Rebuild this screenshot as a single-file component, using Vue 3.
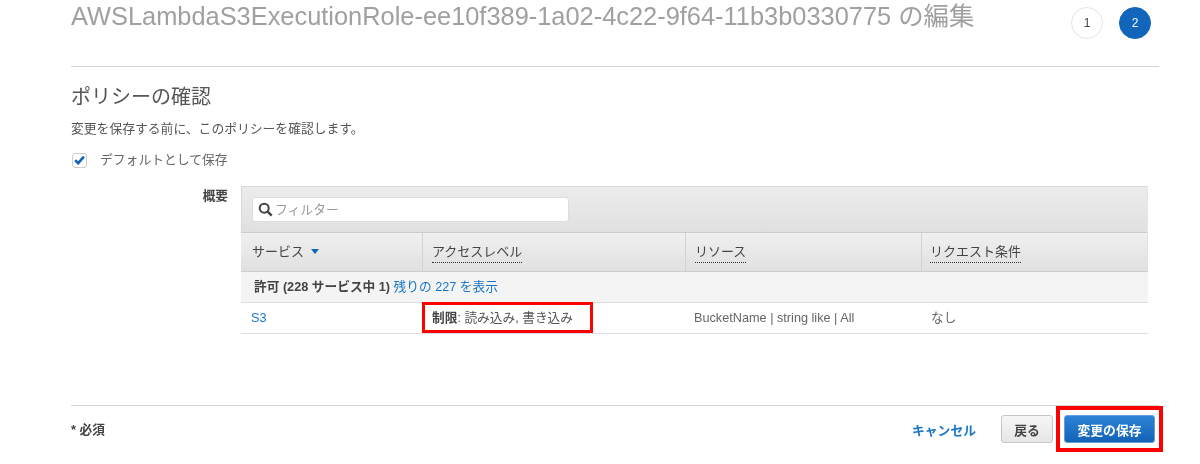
<script setup>
const columns = [
  { label: 'アクセスレベル', width: '263px' },
  { label: 'リソース', width: '236px' },
  { label: 'リクエスト条件', width: 'auto' }
]
</script>

<template>
  <div class="page">
    <header class="head">
      <h1 class="title">AWSLambdaS3ExecutionRole-ee10f389-1a02-4c22-9f64-11b3b0330775 の編集</h1>
      <div class="steps">
        <span class="step">1</span>
        <span class="step on">2</span>
      </div>
    </header>

    <h2 class="sub">ポリシーの確認</h2>
    <p class="desc">変更を保存する前に、このポリシーを確認します。</p>
    <label class="check">
      <span class="box">
        <svg width="11" height="10" viewBox="0 0 10 9"><path d="M1 4.6 3.8 7.4 9 1.4" fill="none" stroke="#1166bb" stroke-width="2.4"/></svg>
      </span>
      <span class="check-text">デフォルトとして保存</span>
    </label>

    <section class="summary">
      <div class="sum-label">概要</div>
      <div class="table">
        <div class="filter-band">
          <div class="filter">
            <svg width="15" height="15" viewBox="0 0 14 14"><circle cx="5.8" cy="5.8" r="4.2" fill="none" stroke="#444" stroke-width="1.9"/><path d="M9 9l3.8 3.8" stroke="#444" stroke-width="2.3"/></svg>
            <span class="filter-text">フィルター</span>
          </div>
        </div>
        <div class="thead">
          <div class="th first">サービス<i class="caret"></i></div>
          <div v-for="c in columns" :key="c.label" class="th" :style="{ width: c.width }">
            <span class="dotted">{{ c.label }}</span>
          </div>
        </div>
        <div class="group">許可 (228 サービス中 1) <a>残りの 227 を表示</a></div>
        <div class="row">
          <div class="td first"><a>S3</a></div>
          <div class="td access"><b>制限</b>: 読み込み, 書き込み<span class="mark"></span></div>
          <div class="td res">BucketName | string like | All</div>
          <div class="td cond">なし</div>
        </div>
      </div>
    </section>

    <footer class="foot">
      <span class="req">* 必須</span>
      <div class="actions">
        <a class="cancel">キャンセル</a>
        <button class="btn back">戻る</button>
        <span class="save-mark"><button class="btn save">変更の保存</button></span>
      </div>
    </footer>
  </div>
</template>

<style scoped>
.page {
  box-sizing: border-box;
  width: 1200px;
  height: 464px;
  padding: 0 41px 0 71px;
  overflow: hidden;
  font-family: "Liberation Sans", "Noto Sans CJK JP", sans-serif;
  font-size: 12.7px;
  color: #444;
  filter: blur(0.35px);
}
.head {
  display: flex;
  justify-content: space-between;
  height: 66px;
  padding-right: 8px;
  border-bottom: 1px solid #d5d5d5;
}
.title {
  margin: 0;
  font-size: 25.4px;
  line-height: 33px;
  font-weight: 400;
  color: #a0a0a0;
  white-space: nowrap;
}
.steps { display: flex; gap: 16px; padding-top: 7px; }
.step {
  box-sizing: border-box;
  width: 32px;
  height: 32px;
  border: 1px solid #e4e4e4;
  border-radius: 50%;
  font-size: 12px;
  line-height: 30px;
  text-align: center;
  color: #444;
}
.step.on { background: #1166bb; border-color: #1166bb; color: #fff; }
.sub {
  margin: 17px 0 0;
  font-size: 20px;
  line-height: 26px;
  font-weight: 400;
  color: #555;
}
.desc { margin: 10px 0 0; font-size: 12.8px; line-height: 18px; color: #555; }
.check {
  display: flex;
  align-items: center;
  gap: 13px;
  margin-top: 13px;
  height: 18px;
  color: #666;
  font-size: 12.8px;
}
.check-text { margin-bottom: 4px; }
.box {
  box-sizing: border-box;
  display: flex;
  align-items: center;
  justify-content: center;
  width: 15px;
  height: 15px;
  margin-left: 1px;
  border: 1px solid #ccc;
  border-radius: 3px;
  background: #fff;
}
.summary { display: flex; margin-top: 17px; }
.sum-label {
  width: 157px;
  padding-top: 1px;
  text-align: right;
  font-weight: 700;
  line-height: 18px;
  color: #444;
}
.table { width: 907px; margin-left: 13px; }
.filter-band {
  box-sizing: border-box;
  height: 47px;
  padding: 10px 10px;
  background: linear-gradient(#ececec, #e0e0e0);
  border: 1px solid #d8d8d8;
  border-bottom-color: #ccc;
  border-right-color: #e6e6e6;
}
.filter {
  box-sizing: border-box;
  display: flex;
  align-items: center;
  gap: 2px;
  width: 317px;
  height: 25px;
  padding-left: 5px;
  background: #fff;
  border: 1px solid #ddd;
  border-radius: 3px;
  font-size: 12.8px;
  color: #999;
}
.filter-text { margin-bottom: 2px; }
.thead {
  display: flex;
  height: 39px;
  background: linear-gradient(#f0f0f0, #e0e0e0);
  border-bottom: 1px solid #ccc;
  box-sizing: border-box;
  font-size: 13px;
  color: #444;
}
.th {
  box-sizing: border-box;
  padding: 10px 0 0 9px;
  line-height: 18px;
  border-right: 1px solid #d2d2d2;
}
.th:last-child { flex: 1; border-right: 1px solid #e2e2e2; padding-left: 8px; }
.th.first { width: 182px; padding-left: 11px; }
.dotted { display: inline-block; border-bottom: 1px dotted #333; line-height: 18px; padding-bottom: 1px; }
.caret {
  display: inline-block;
  margin-left: 7px;
  vertical-align: 2px;
  border-left: 4px solid transparent;
  border-right: 4px solid transparent;
  border-top: 5px solid #1166bb;
}
.group {
  box-sizing: border-box;
  height: 31px;
  padding: 6px 0 0 13px;
  line-height: 18px;
  background: #f4f4f4;
  border-bottom: 1px solid #ddd;
  font-weight: 700;
  color: #444;
}
.group a { font-weight: 400; color: #1a75c7; }
.row {
  display: flex;
  height: 31px;
  box-sizing: border-box;
  border-bottom: 1px solid #ddd;
  color: #666;
  line-height: 30px;
}
.td { box-sizing: border-box; }
.td.first { width: 181px; padding-left: 10px; }
.td.first a { color: #1a75c7; }
.access { position: relative; width: 263px; padding-left: 10px; color: #555; }
.access b { color: #444; }
.mark {
  position: absolute;
  left: 0;
  top: -1px;
  width: 171px;
  height: 31px;
  box-sizing: border-box;
  border: 3px solid #f00;
}
.res { width: 236px; padding-left: 9px; }
.cond { padding-left: 10px; }
.foot {
  display: flex;
  justify-content: space-between;
  margin-top: 71px;
  border-top: 1px solid #d5d5d5;
  height: 46px;
}
.req { padding-top: 15px; font-weight: 700; line-height: 18px; color: #444; }
.actions { display: flex; align-items: center; margin-right: -4px; }
.cancel { color: #1a75c7; font-size: 12.8px; font-weight: 700; margin-right: 25px; }
.btn {
  box-sizing: border-box;
  height: 28px;
  border-radius: 3px;
  font-family: inherit;
  font-size: 12.8px;
  font-weight: 700;
  padding: 0;
}
.back {
  width: 52px;
  background: linear-gradient(#f6f6f6, #e6e6e6);
  border: 1px solid #c6c6c6;
  color: #444;
}
.save-mark {
  display: flex;
  align-items: center;
  justify-content: center;
  box-sizing: border-box;
  width: 107px;
  height: 46px;
  margin-left: 3px;
  border: 4px solid #f00;
}
.save {
  width: 91px;
  background: linear-gradient(#2d83d6, #1263b5);
  border: 1px solid #5f9fdc;
  color: #fff;
}
</style>
